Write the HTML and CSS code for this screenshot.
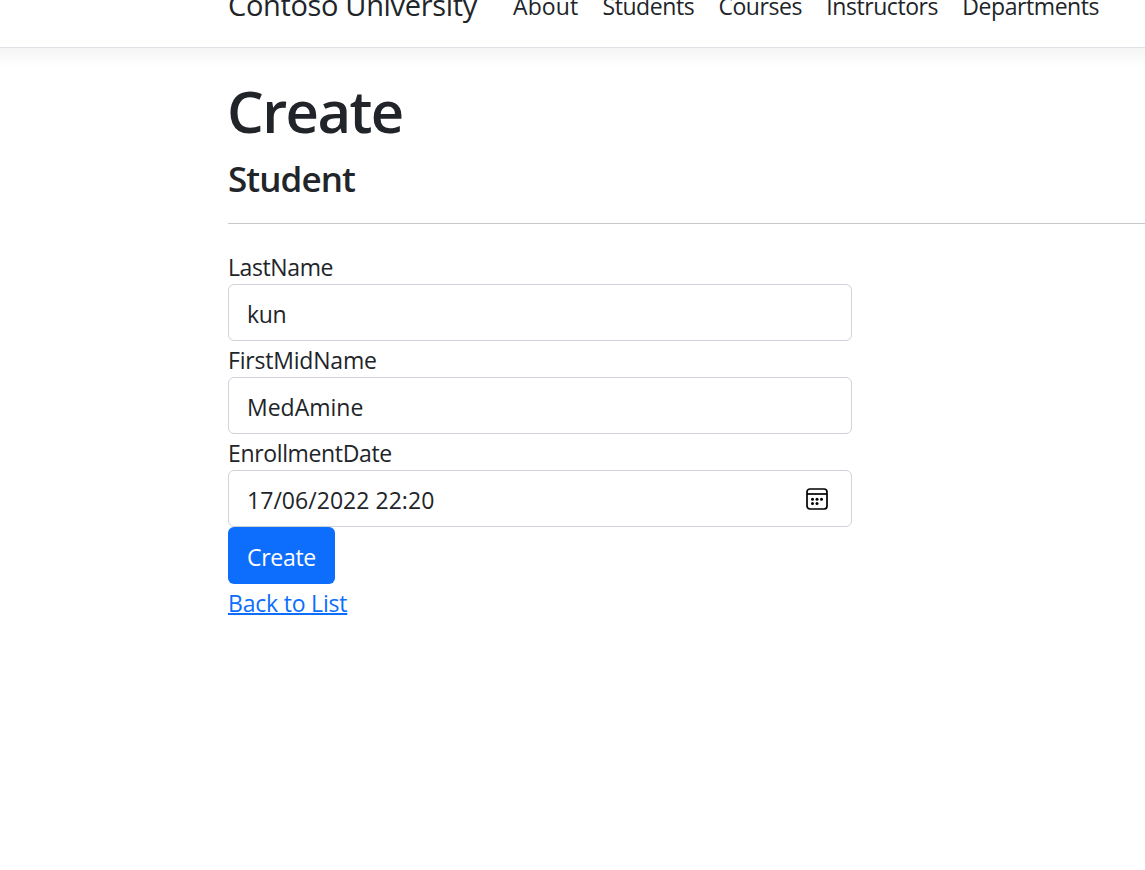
FILE: index.html
```html
<!DOCTYPE html>
<html lang="en">
<head>
<meta charset="utf-8">
<title>Create - Contoso University</title>
<link rel="stylesheet" href="styles.css">
</head>
<body>
<header class="navbar">
  <a class="brand">Contoso University</a>
  <nav class="links">
    <a class="about">About</a>
    <a>Students</a>
    <a>Courses</a>
    <a>Instructors</a>
    <a>Departments</a>
  </nav>
</header>
<main class="container">
  <h1 class="title">Create</h1>
  <h4 class="subtitle">Student</h4>
  <hr class="rule">
  <form class="form">
    <label class="label label-last">LastName</label>
    <div class="control"><span class="value-last">kun</span></div>
    <label class="label label-first">FirstMidName</label>
    <div class="control"><span>MedAmine</span></div>
    <label class="label label-date">EnrollmentDate</label>
    <div class="control">
      <span class="value-date">17/06/2022 22:20</span>
      <svg class="calendar" width="24" height="24" viewBox="0 0 24 24" fill="none">
        <rect x="2" y="2" width="20" height="20" rx="3" stroke="#000" stroke-width="1.7"/>
        <path d="M2 7H22" stroke="#000" stroke-width="1.7"/>
        <g fill="#000"><circle cx="7.5" cy="12.2" r="1.5"/><circle cx="12" cy="12.2" r="1.5"/><circle cx="16.5" cy="12.2" r="1.5"/><circle cx="7.5" cy="16.6" r="1.5"/><circle cx="12" cy="16.6" r="1.5"/></g>
      </svg>
    </div>
    <button class="submit" type="button">Create</button>
  </form>
  <a class="back">Back to List</a>
</main>
</body>
</html>
```
FILE: styles.css
```css
* { box-sizing: border-box; }
body {
  margin: 0;
  height: 870px;
  overflow: hidden;
  background: #fff;
  color: #212529;
  font: 400 23px/36px "Open Sans", "Noto Sans", sans-serif;
}
.navbar {
  display: flex;
  align-items: flex-end;
  height: 48px;
  margin: 0 -24px;
  padding: 0 0 22px 252px;
  border-bottom: 1px solid #dee2e6;
  box-shadow: 0 6px 18px 1px rgba(0, 0, 0, .05);
  overflow: hidden;
  white-space: nowrap;
}
.brand { width: 285px; flex: none; font-size: 29px; line-height: 40px; letter-spacing: -.34px; }
.links { display: flex; gap: 24.2px; padding-bottom: 1px; letter-spacing: -.43px; }
.about { letter-spacing: .1px; }
.container { padding: 27px 0 0 228px; }
.title { margin: 0 0 0 -1px; font-size: 58px; line-height: 72px; font-weight: 600; letter-spacing: -1.6px; }
.subtitle { margin: 12px 0 0; font-size: 35px; line-height: 40px; font-weight: 600; letter-spacing: -.9px; }
.rule { margin: 24px 0; border: 0; border-top: 1px solid #c8c9ca; }
.form { display: flex; flex-direction: column; width: 624px; }
.label { height: 36px; padding-top: 1px; }
.label-last { letter-spacing: -.4px; }
.label-first { letter-spacing: -.2px; }
.label-date { letter-spacing: -.36px; }
.value-last { letter-spacing: -.3px; }
.value-date { letter-spacing: .04px; }
.control {
  display: flex;
  align-items: center;
  justify-content: space-between;
  height: 57px;
  padding: 2px 22px 0 18px;
  border: 1px solid #ced4da;
  border-radius: 6px;
}
.calendar { margin-top: -2px; }
.submit {
  width: 107px;
  height: 57px;
  padding: 3px 0 0;
  border: 0;
  border-radius: 6px;
  background: #0d6efd;
  color: #fff;
  font: inherit;
  letter-spacing: -.3px;
}
.back {
  display: inline-block;
  margin-top: 1px;
  color: #0d6efd;
  letter-spacing: -.2px;
  text-decoration: underline;
  text-decoration-thickness: 2px;
}
```
